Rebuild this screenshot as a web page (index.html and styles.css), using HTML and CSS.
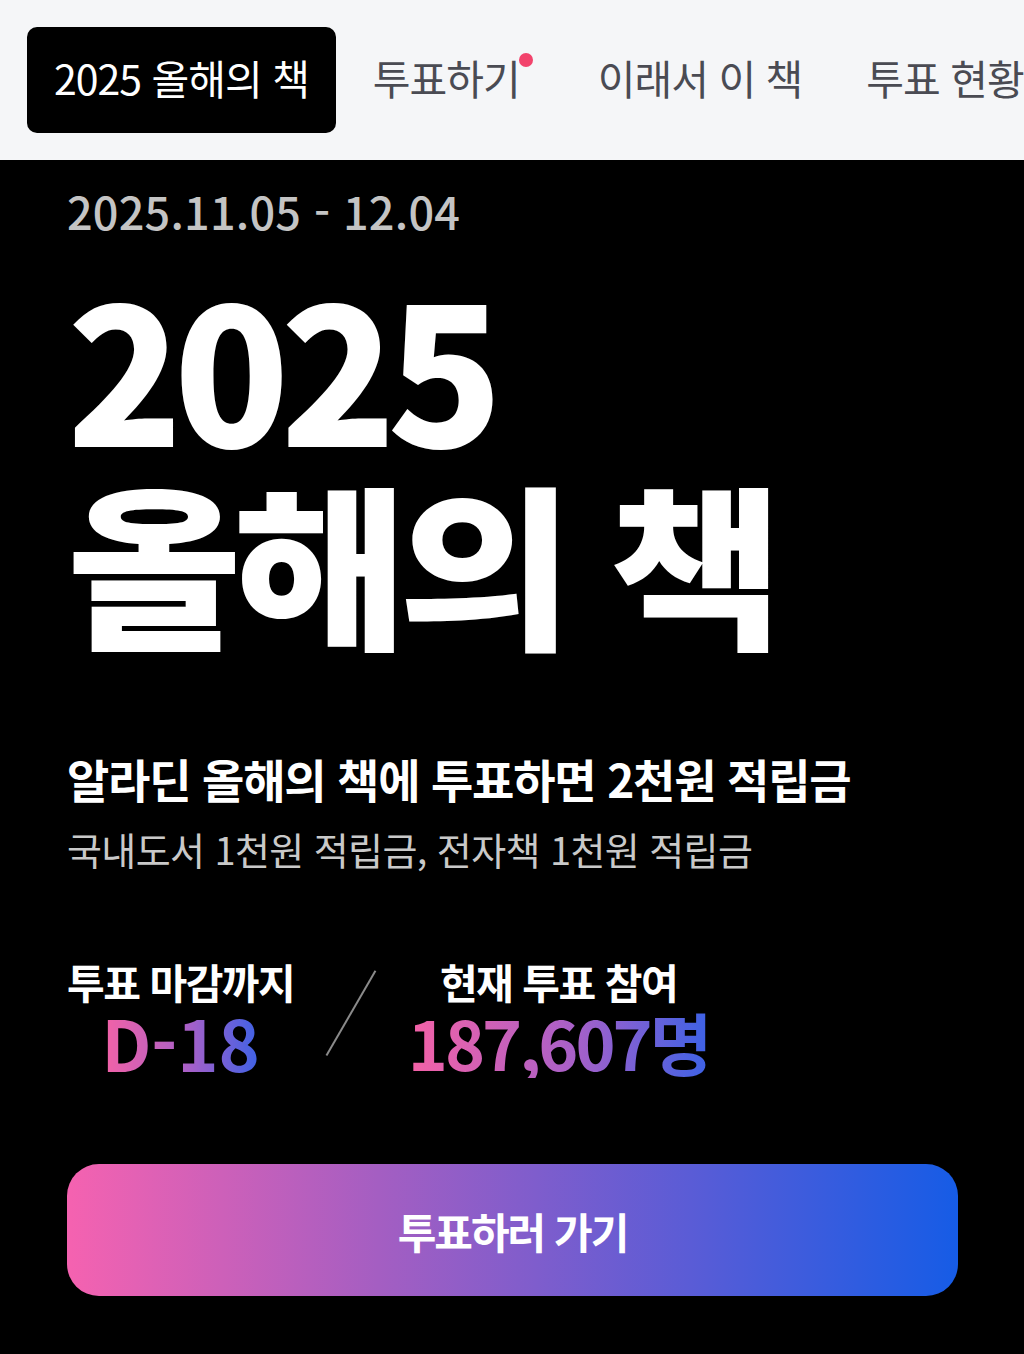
FILE: index.html
```html
<!DOCTYPE html>
<html lang="ko">
  <head>
    <meta charset="UTF-8" />
    <meta name="viewport" content="width=device-width, initial-scale=1.0" />
    <title>2025 올해의 책</title>
    <link rel="stylesheet" href="styles.css">
  </head>
  <body>
    <nav class="tabs">
      <a class="tab active">2025 올해의 책</a>
      <a class="tab has-dot">투표하기<span class="dot"></span></a>
      <a class="tab">이래서 이 책</a>
      <a class="tab">투표 현황</a>
    </nav>

    <section class="hero">
      <p class="period">2025.11.05 - 12.04</p>
      <h1 class="title">2025<br /><span class="title-ko">올해의 책</span></h1>

      <p class="lead">알라딘 올해의 책에 투표하면 2천원 적립금</p>
      <p class="sub">국내도서 1천원 적립금, 전자책 1천원 적립금</p>

      <div class="stats">
        <div class="stat">
          <span class="label">투표 마감까지</span>
          <span class="value">D-18</span>
        </div>
        <div class="divider"></div>
        <div class="stat">
          <span class="label">현재 투표 참여</span>
          <span class="value tight">187,607명</span>
        </div>
      </div>

      <button type="button" class="vote">투표하러 가기</button>
    </section>
  </body>
</html>
```

FILE: styles.css
```css
body {
  margin: 0;
  font-family: "Noto Sans CJK KR", "Noto Sans", sans-serif;
  background: #000;
}
.tabs {
  display: flex;
  align-items: center;
  gap: 10px;
  padding: 27px 27px;
  background: #f5f6f8;
  overflow: hidden;
  white-space: nowrap;
}
.tab {
  position: relative;
  display: flex;
  align-items: center;
  height: 106px;
  padding: 0 27px 6px;
  box-sizing: border-box;
  border-radius: 10px;
  font-size: 41px;
  letter-spacing: -1px;
  color: #4a4b53;
}
.tab.active {
  background: #000;
  color: #fff;
}
.tab.has-dot {
  margin-right: 14px;
}
.dot {
  position: absolute;
  top: 26px;
  right: 14px;
  width: 14px;
  height: 14px;
  border-radius: 50%;
  background: #f2436c;
}
.hero {
  padding: 18px 66px 60px 67px;
  color: #fff;
}
.period {
  margin: 0;
  font-size: 45px;
  font-weight: 500;
  letter-spacing: 0.2px;
  color: #c4c4c4;
}
.title {
  margin: 22px 0 0 0;
  font-size: 190px;
  font-weight: 900;
  line-height: 200px;
  letter-spacing: -9px;
}
.title-ko {
  display: inline-block;
  transform: scaleY(0.92);
  transform-origin: 0 20%;
}
.lead {
  margin: 80px 0 0;
  font-size: 46px;
  font-weight: 700;
  letter-spacing: -1.2px;
}
.sub {
  margin: 10px 0 0;
  font-size: 38px;
  letter-spacing: -0.6px;
  color: #c9c9c9;
}
.stats {
  display: flex;
  align-items: center;
  margin-top: 80px;
}
.stat {
  display: flex;
  flex-direction: column;
  align-items: center;
}
.label {
  font-size: 41px;
  font-weight: 700;
  letter-spacing: -1.5px;
  line-height: 50px;
}
.value {
  font-size: 70px;
  font-weight: 600;
  line-height: 72px;
  letter-spacing: 0;
  background: linear-gradient(90deg, #f562a6 0%, #a860c8 55%, #3d62e6 100%);
  -webkit-background-clip: text;
  background-clip: text;
  color: transparent;
}
.value.tight {
  font-size: 68px;
  letter-spacing: -3px;
}
.divider {
  width: 1.5px;
  height: 98px;
  margin: -8px 56px 0 56px;
  background: #8a8a8a;
  transform: rotate(30deg);
}
.vote {
  display: block;
  width: 100%;
  height: 132px;
  margin-top: 86px;
  border: 0;
  border-radius: 32px;
  background: linear-gradient(90deg, #f562b0 0%, #a45ec2 35%, #5a5cd6 70%, #165ce6 100%);
  font-family: inherit;
  font-size: 42px;
  font-weight: 700;
  letter-spacing: -2px;
  color: #fff;
}
```
